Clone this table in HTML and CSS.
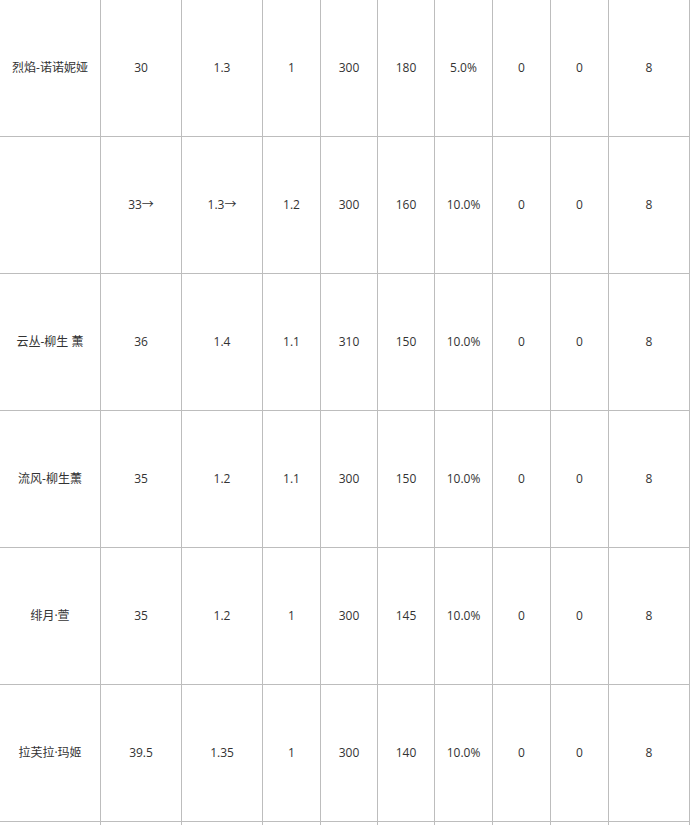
FILE: index.html
```
<!DOCTYPE html>
<html lang="zh-CN">
<head>
<meta charset="utf-8">
<title>角色数据表</title>
<link rel="stylesheet" href="styles.css">
</head>
<body>
<table class="stats">
  <colgroup>
    <col class="c-name">
    <col class="c-wide">
    <col class="c-wide">
    <col class="c-57">
    <col class="c-56">
    <col class="c-56">
    <col class="c-57">
    <col class="c-57">
    <col class="c-57">
    <col class="c-wide">
  </colgroup>
  <tbody>
    <tr><td>烈焰-诺诺妮娅</td><td>30</td><td>1.3</td><td>1</td><td>300</td><td>180</td><td>5.0%</td><td>0</td><td>0</td><td>8</td></tr>
    <tr><td></td><td>33→</td><td>1.3→</td><td>1.2</td><td>300</td><td>160</td><td>10.0%</td><td>0</td><td>0</td><td>8</td></tr>
    <tr><td>云丛-柳生 薰</td><td>36</td><td>1.4</td><td>1.1</td><td>310</td><td>150</td><td>10.0%</td><td>0</td><td>0</td><td>8</td></tr>
    <tr><td>流风-柳生薰</td><td>35</td><td>1.2</td><td>1.1</td><td>300</td><td>150</td><td>10.0%</td><td>0</td><td>0</td><td>8</td></tr>
    <tr><td>绯月·萱</td><td>35</td><td>1.2</td><td>1</td><td>300</td><td>145</td><td>10.0%</td><td>0</td><td>0</td><td>8</td></tr>
    <tr><td>拉芙拉·玛姬</td><td>39.5</td><td>1.35</td><td>1</td><td>300</td><td>140</td><td>10.0%</td><td>0</td><td>0</td><td>8</td></tr>
    <tr><td></td><td></td><td></td><td></td><td></td><td></td><td></td><td></td><td></td><td></td></tr>
  </tbody>
</table>
</body>
</html>
```

FILE: styles.css
```
html, body {
  margin: 0;
  padding: 0;
  background: #ffffff;
  overflow: hidden;
}

.stats {
  margin: -1px 0 0 -1px;
  width: 691px;
  table-layout: fixed;
  border-collapse: separate;
  border-spacing: 1px;
  background: #bdbdbd;
  font-family: "Open Sans", "Noto Sans CJK SC", sans-serif;
  font-size: 12px;
  color: #333333;
}

.c-name { width: 100px; }
.c-wide { width: 80px; }
.c-57 { width: 57px; }
.c-56 { width: 56px; }

.stats td {
  height: 136px;
  padding: 0;
  background: #ffffff;
  text-align: center;
  vertical-align: middle;
  white-space: nowrap;
  line-height: 16px;
}
```
